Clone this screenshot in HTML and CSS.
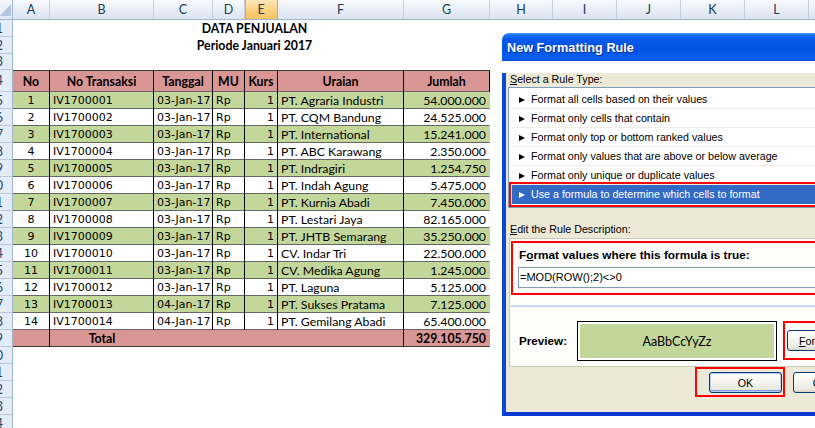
FILE: index.html
```html
<!DOCTYPE html>
<html>
<head>
<meta charset="utf-8">
<link rel="stylesheet" href="styles.css">
</head>
<body>
<div class="colhead">
  <div class="corner"><svg width="12" height="19" viewBox="0 0 12 19"><polygon points="11,4 11,16 0,16" fill="#b3c5dc"/></svg></div>
  <div class="ch w-a">A</div>
  <div class="ch w-b">B</div>
  <div class="ch w-c">C</div>
  <div class="ch w-d">D</div>
  <div class="ch w-e act">E</div>
  <div class="ch w-f">F</div>
  <div class="ch w-g">G</div>
  <div class="ch w-h">H</div>
  <div class="ch w-n">I</div>
  <div class="ch w-n">J</div>
  <div class="ch w-n">K</div>
  <div class="ch w-n">L</div>
  <div class="ch w-m">M</div>
</div>
<div class="sheet">
  <div class="rowhead">
    <div class="rh"><span>1</span></div>
    <div class="rh"><span>2</span></div>
    <div class="rh h16"><span>3</span></div>
    <div class="rh h22"><span>4</span></div>
    <div class="rh"><span>5</span></div>
    <div class="rh"><span>6</span></div>
    <div class="rh"><span>7</span></div>
    <div class="rh"><span>8</span></div>
    <div class="rh"><span>9</span></div>
    <div class="rh"><span>10</span></div>
    <div class="rh"><span>11</span></div>
    <div class="rh"><span>12</span></div>
    <div class="rh"><span>13</span></div>
    <div class="rh"><span>14</span></div>
    <div class="rh"><span>15</span></div>
    <div class="rh"><span>16</span></div>
    <div class="rh"><span>17</span></div>
    <div class="rh"><span>18</span></div>
    <div class="rh"><span>19</span></div>
    <div class="rh"><span>20</span></div>
    <div class="rh"><span>21</span></div>
    <div class="rh"><span>22</span></div>
    <div class="rh"><span>23</span></div>
    <div class="rh"><span>24</span></div>
  </div>
  <div class="cells">
    <div class="title">DATA PENJUALAN</div>
    <div class="title">Periode Januari 2017</div>
    <div class="title h16"></div>
    <div class="tbl">
      <div class="th">No</div><div class="th">No Transaksi</div><div class="th">Tanggal</div><div class="th">MU</div><div class="th">Kurs</div><div class="th">Uraian</div><div class="th">Jumlah</div>

      <div class="grn v ctr">1</div><div class="grn v">IV1700001</div><div class="grn v">03-Jan-17</div><div class="grn v">Rp</div><div class="grn v rt">1</div><div class="grn">PT. Agraria Industri</div><div class="grn rt nb">54.000.000</div>
      <div class="v ctr">2</div><div class="v">IV1700002</div><div class="v">03-Jan-17</div><div class="v">Rp</div><div class="v rt">1</div><div>PT. CQM Bandung</div><div class="rt nb">24.525.000</div>
      <div class="grn v ctr">3</div><div class="grn v">IV1700003</div><div class="grn v">03-Jan-17</div><div class="grn v">Rp</div><div class="grn v rt">1</div><div class="grn">PT. International</div><div class="grn rt nb">15.241.000</div>
      <div class="v ctr">4</div><div class="v">IV1700004</div><div class="v">03-Jan-17</div><div class="v">Rp</div><div class="v rt">1</div><div>PT. ABC Karawang</div><div class="rt nb">2.350.000</div>
      <div class="grn v ctr">5</div><div class="grn v">IV1700005</div><div class="grn v">03-Jan-17</div><div class="grn v">Rp</div><div class="grn v rt">1</div><div class="grn">PT. Indragiri</div><div class="grn rt nb">1.254.750</div>
      <div class="v ctr">6</div><div class="v">IV1700006</div><div class="v">03-Jan-17</div><div class="v">Rp</div><div class="v rt">1</div><div>PT. Indah Agung</div><div class="rt nb">5.475.000</div>
      <div class="grn v ctr">7</div><div class="grn v">IV1700007</div><div class="grn v">03-Jan-17</div><div class="grn v">Rp</div><div class="grn v rt">1</div><div class="grn">PT. Kurnia Abadi</div><div class="grn rt nb">7.450.000</div>
      <div class="v ctr">8</div><div class="v">IV1700008</div><div class="v">03-Jan-17</div><div class="v">Rp</div><div class="v rt">1</div><div>PT. Lestari Jaya</div><div class="rt nb">82.165.000</div>
      <div class="grn v ctr">9</div><div class="grn v">IV1700009</div><div class="grn v">03-Jan-17</div><div class="grn v">Rp</div><div class="grn v rt">1</div><div class="grn">PT. JHTB Semarang</div><div class="grn rt nb">35.250.000</div>
      <div class="v ctr">10</div><div class="v">IV1700010</div><div class="v">03-Jan-17</div><div class="v">Rp</div><div class="v rt">1</div><div>CV. Indar Tri</div><div class="rt nb">22.500.000</div>
      <div class="grn v ctr">11</div><div class="grn v">IV1700011</div><div class="grn v">03-Jan-17</div><div class="grn v">Rp</div><div class="grn v rt">1</div><div class="grn">CV. Medika Agung</div><div class="grn rt nb">1.245.000</div>
      <div class="v ctr">12</div><div class="v">IV1700012</div><div class="v">03-Jan-17</div><div class="v">Rp</div><div class="v rt">1</div><div>PT. Laguna</div><div class="rt nb">5.125.000</div>
      <div class="grn v ctr">13</div><div class="grn v">IV1700013</div><div class="grn v">04-Jan-17</div><div class="grn v">Rp</div><div class="grn v rt">1</div><div class="grn">PT. Sukses Pratama</div><div class="grn rt nb">7.125.000</div>
      <div class="v ctr">14</div><div class="v">IV1700014</div><div class="v">04-Jan-17</div><div class="v">Rp</div><div class="v rt">1</div><div>PT. Gemilang Abadi</div><div class="rt nb">65.400.000</div>

      <div class="tot"></div><div class="tot span5"><span class="tlabel">Total</span></div><div class="tot rt nb">329.105.750</div>
    </div>
  </div>
</div>

<div class="dlg">
  <div class="dlg-title">New Formatting Rule</div>
  <div class="dlg-body">
    <div class="lbl lbl1"><u>S</u>elect a Rule Type:</div>
    <div class="list">
      <div class="item">Format all cells based on their values</div>
      <div class="item">Format only cells that contain</div>
      <div class="item">Format only top or bottom ranked values</div>
      <div class="item">Format only values that are above or below average</div>
      <div class="item">Format only unique or duplicate values</div>
      <div class="item sel">Use a formula to determine which cells to format</div>
    </div>
    <div class="lbl lbl2"><u>E</u>dit the Rule Description:</div>
    <div class="panel">
      <div class="mark fmla">
        <div class="flbl">F<u>o</u>rmat values where this formula is true:</div>
        <div class="input">=MOD(ROW();2)&lt;&gt;0</div>
      </div>
      <div class="sep"></div>
      <div class="prow">
        <div class="plbl">Preview:</div>
        <div class="pbox"><div class="pfill">AaBbCcYyZz</div></div>
        <div class="mark fmark"><div class="btn wide"><u>F</u>ormat...</div></div>
      </div>
    </div>
    <div class="brow">
      <div class="mark okmark"><div class="btn def">OK</div></div>
      <div class="btn cancel">Cancel</div>
    </div>
  </div>
</div>
</body>
</html>
```

FILE: styles.css
```css
* { box-sizing: border-box; }

body {
  margin: 0;
  width: 815px;
  height: 428px;
  overflow: hidden;
  position: relative;
  background: #ffffff;
  font-family: "Lato", "Liberation Sans", sans-serif;
  color: #000;
}

/* column header */
.colhead {
  display: flex;
  height: 20px;
  background: linear-gradient(#f8fafd, #e7edf6 55%, #dbe4f0);
  border-bottom: 1px solid #9eb6ce;
}
.corner {
  width: 13px;
  flex: none;
  border-right: 1px solid #9eb6ce;
  background: linear-gradient(#f3f6fb, #e1e9f3);
}
.corner svg { display: block; }
.ch {
  flex: none;
  display: flex;
  align-items: center;
  justify-content: center;
  border-right: 1px solid #c3cfde;
  font-size: 12.5px;
  color: #253a53;
}
.w-a { width: 37px; }
.w-b { width: 104px; }
.w-c { width: 59px; }
.w-d { width: 32px; }
.w-e { width: 33px; }
.w-f { width: 126px; }
.w-g { width: 86px; }
.w-h { width: 63px; }
.w-n { width: 64px; }
.w-m { width: 50px; }
.ch.act {
  background: linear-gradient(#fde7b9, #f9d07e 55%, #f5c45f);
  border-right-color: #e4a440;
  box-shadow: inset 1px 0 0 #e4a440;
}

/* sheet */
.sheet { display: flex; }
.rowhead {
  width: 13px;
  flex: none;
  background: #e4ecf7;
  border-right: 1px solid #9eb6ce;
  overflow: hidden;
}
.rh {
  height: 17px;
  display: flex;
  align-items: center;
  justify-content: flex-end;
  padding-right: 9px;
  border-bottom: 1px solid #b9c9dc;
  font-size: 12.5px;
  color: #27415f;
}
.rh span { flex: none; }
.rh.h16 { height: 16px; }
.rh.h22 { height: 22px; }

.cells { width: 477px; flex: none; }
.title {
  height: 17px;
  display: flex;
  align-items: center;
  justify-content: center;
  padding-left: 6px;
  font-weight: 700;
  font-size: 12.3px;
  line-height: 13px;
}
.title.h16 { height: 16px; }

.tbl {
  display: grid;
  grid-template-columns: 37px 104px 59px 32px 33px 126px 86px;
  grid-template-rows: 22px;
  grid-auto-rows: 17px;
}
.tbl > div {
  display: flex;
  align-items: flex-end;
  padding: 0 3px 1px;
  border-right: 1px solid #000;
  border-bottom: 1px solid #666;
  white-space: nowrap;
  overflow: hidden;
  font-size: 12.3px;
  line-height: 13px;
}
.tbl > .th {
  background: #da9694;
  font-weight: 700;
  justify-content: center;
  border-top: 1px solid #3c3c3c;
  padding-bottom: 3px;
}
.tbl > .v {
  font-family: "DejaVu Sans", sans-serif;
  font-size: 11px;
}
.tbl > .ctr { justify-content: center; }
.tbl > .rt { justify-content: flex-end; }
.tbl > .grn { background: #c4d79b; }
.tbl > .nb { border-right-color: transparent; }
.tbl > .tot {
  background: #da9694;
  font-weight: 700;
  border-bottom-color: #3c3c3c;
}
.tbl > .span5 { grid-column: span 5; }
.tlabel { width: 98px; text-align: center; }

/* dialog */
.dlg {
  position: absolute;
  left: 502px;
  top: 33px;
  width: 440px;
  font-family: "Liberation Sans", Arial, sans-serif;
  font-size: 10.7px;
}
.dlg-title {
  height: 28px;
  padding: 2px 0 0 5px;
  line-height: 26px;
  border-radius: 7px 7px 0 0;
  background: linear-gradient(#4a98fb 0%, #1c6ef2 7%, #0659ea 22%, #0054e3 60%, #0a5ef0 88%, #0650d8 100%);
  color: #fff;
  font-weight: 700;
  font-size: 12.7px;
  text-shadow: 1px 1px 0 #0b2a98;
}
.dlg-body {
  height: 343px;
  background: #ece9d8;
  border-left: 4px solid #0a48dc;
  border-bottom: 4px solid #0838d2;
  padding-left: 2px;
}
.lbl {
  height: 13px;
  line-height: 13px;
  padding-left: 2px;
}
.lbl1 { margin-top: 12px; }
.lbl2 { margin-top: 15px; }

.list {
  margin-top: 1px;
  height: 121px;
  border: 1px solid #7f9db9;
  background: #fff;
  padding: 2px 0 0 3px;
}
.item {
  height: 19px;
  line-height: 19px;
  padding-left: 7px;
  display: flex;
  align-items: center;
  white-space: nowrap;
  box-shadow: inset 0 -1px 0 #f0eee6;
}
.item::before {
  content: "";
  flex: none;
  width: 0;
  height: 0;
  border-left: 6px solid #000;
  border-top: 3.5px solid transparent;
  border-bottom: 3.5px solid transparent;
  margin-right: 6px;
}
.item.sel {
  background: #316ac5;
  color: #fff;
  outline: 2px solid #f00;
  outline-offset: 1px;
  box-shadow: none;
}
.item.sel::before { border-left-color: #fff; }

.panel {
  margin-top: 2px;
  margin-left: 1px;
  height: 129px;
  border: 1px solid #cbc8b8;
  background: #fcfcfa;
  padding: 2px 0 0 1px;
}
.mark { border: 2px solid #f00; }
.fmla { padding: 5px 0 5px 5px; }
.flbl {
  height: 14px;
  line-height: 14px;
  padding-left: 1px;
  font-weight: 700;
  font-size: 11.8px;
  white-space: nowrap;
}
.input {
  margin-top: 5px;
  height: 21px;
  line-height: 19px;
  border: 1px solid #7f9db9;
  background: #fff;
  padding-left: 1px;
  font-size: 11px;
}
.sep {
  margin-top: 10px;
  height: 2px;
  background: #c8d9f0;
}
.prow {
  margin-top: 14px;
  display: flex;
  align-items: flex-start;
  padding-left: 8px;
}
.plbl {
  width: 58px;
  flex: none;
  line-height: 40px;
  font-weight: 700;
  font-size: 11.7px;
}
.pbox {
  width: 200px;
  height: 40px;
  flex: none;
  border: 1px solid #000;
  background: #fff;
  padding: 2px;
}
.pfill {
  height: 100%;
  background: #c4d79b;
  display: flex;
  align-items: center;
  justify-content: center;
  font-family: "Lato", sans-serif;
  font-size: 12.5px;
}
.fmark {
  margin-left: 6px;
  padding: 7px 0 7px 2px;
  flex: none;
}
.btn {
  width: 73px;
  height: 21px;
  flex: none;
  border: 1px solid #003c74;
  border-radius: 3px;
  background: linear-gradient(#ffffff, #f4f3ee 50%, #ebe9e0 85%, #d8d3c6);
  display: flex;
  align-items: center;
  justify-content: center;
  color: #000;
}
.btn.wide { justify-content: flex-start; padding-left: 11px; }
.btn.def {
  box-shadow: inset 0 0 0 1px #b7cff4, inset 0 -1px 0 1px #7c9be6;
}
.brow {
  display: flex;
  align-items: flex-start;
  padding-left: 187px;
}
.okmark { padding: 3px 1px 2px 12px; }
.cancel { margin-left: 8px; margin-top: 5px; }
```
